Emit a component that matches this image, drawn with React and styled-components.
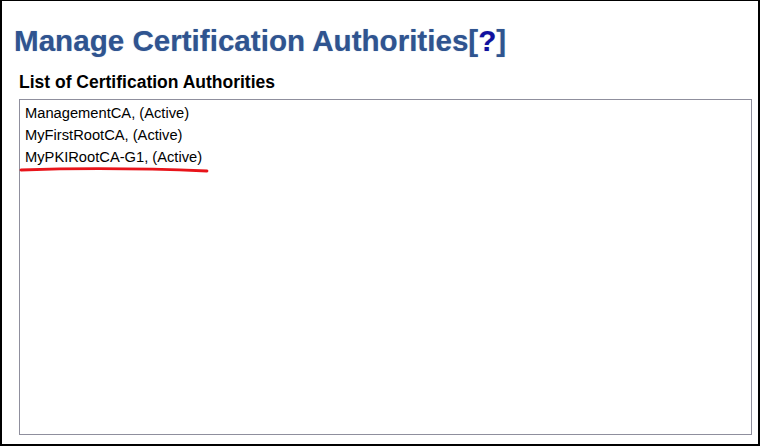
import React from "react";
import styled, { createGlobalStyle } from "styled-components";

const Global = createGlobalStyle`
  html, body { margin: 0; padding: 0; background: #fff; }
  body { font-family: "Liberation Sans", Arial, sans-serif; }
`;

const Frame = styled.div`
  box-sizing: border-box;
  width: 760px;
  height: 446px;
  border-style: solid;
  border-color: #000;
  border-width: 1px 2px 2px 2px;
  padding: 22px 8px 0 12px;
  background: #fff;
  overflow: hidden;
`;

const Title = styled.h1`
  margin: 0;
  font-size: 29.6px;
  line-height: 36px;
  font-weight: bold;
  color: #2f5490;
  text-shadow: 0 0 1px rgba(47, 84, 144, 0.45);
`;

const HelpLink = styled.a`
  color: #1010a0;
  text-decoration: none;
`;

const Section = styled.section`
  padding-left: 5px;
  margin-top: 12px;
`;

const Heading = styled.h2`
  margin: 0 0 6px 0;
  font-size: 17.5px;
  line-height: 22px;
  font-weight: bold;
  color: #000;
`;

const ListBox = styled.div`
  position: relative;
  box-sizing: border-box;
  width: 733px;
  height: 336px;
  border: 1px solid #8f8f9d;
  padding: 2px 5px;
  background: #fff;
`;

const Item = styled.div`
  font-size: 14.7px;
  line-height: 22px;
  color: #000;
  white-space: nowrap;
`;

const Annotation = styled.svg`
  position: absolute;
  left: 0;
  top: 64px;
  width: 200px;
  height: 12px;
  overflow: visible;
  pointer-events: none;
`;

const cas = ["ManagementCA", "MyFirstRootCA", "MyPKIRootCA-G1"];

export default function App() {
  return (
    <>
      <Global />
      <Frame>
        <Title>
          Manage Certification Authorities[<HelpLink href="#">?</HelpLink>]
        </Title>
        <Section>
          <Heading>List of Certification Authorities</Heading>
          <ListBox>
            {cas.map((c) => (
              <Item key={c}>{c}, (Active)</Item>
            ))}
            <Annotation viewBox="0 0 200 12">
              <path
                d="M1 6 Q 90 3 187 7"
                fill="none"
                stroke="#e8141a"
                strokeWidth="2.8"
                strokeLinecap="round"
              />
            </Annotation>
          </ListBox>
        </Section>
      </Frame>
    </>
  );
}
